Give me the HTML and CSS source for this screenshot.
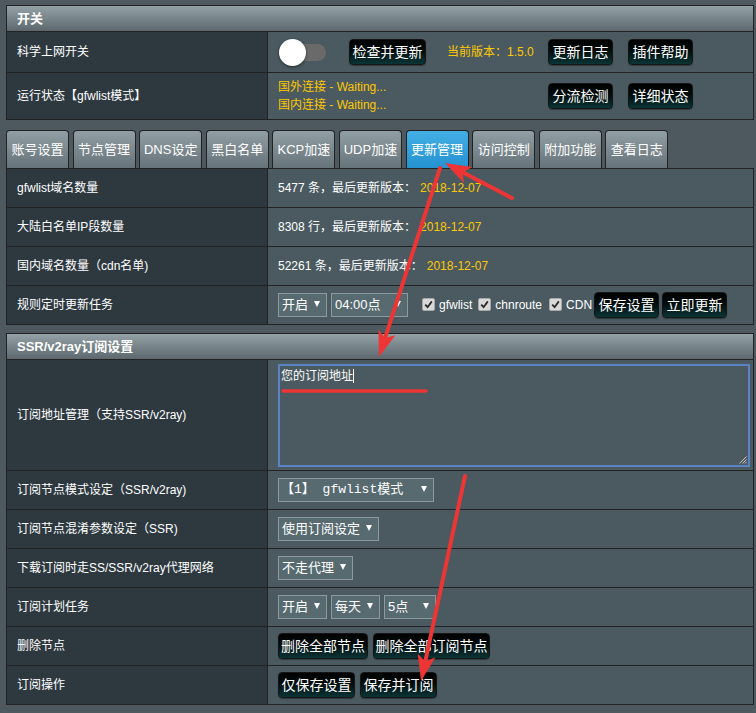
FILE: index.html
```html
<!DOCTYPE html>
<html lang="zh-CN">
<head>
<meta charset="utf-8">
<title>SS</title>
<link rel="stylesheet" href="styles.css">
</head>
<body>
<div class="page">
  <div class="tbl">
    <div class="thead">开关</div>
    <div class="row h40">
      <div class="lbl">科学上网开关</div>
      <div class="val">
        <span class="toggle"><span class="track"></span><span class="knob"></span></span>
        <button class="btn b5 ml23">检查并更新</button>
        <span class="version">当前版本：1.5.0</span>
        <button class="btn b4">更新日志</button>
        <button class="btn b4 ml15">插件帮助</button>
      </div>
    </div>
    <div class="row h46">
      <div class="lbl">运行状态【gfwlist模式】</div>
      <div class="val">
        <div class="status">
          <div>国外连接 - Waiting...</div>
          <div>国内连接 - Waiting...</div>
        </div>
        <button class="btn b4">分流检测</button>
        <button class="btn b4 ml15">详细状态</button>
      </div>
    </div>
  </div>

  <div class="tabs">
    <div class="tab">账号设置</div>
    <div class="tab">节点管理</div>
    <div class="tab">DNS设定</div>
    <div class="tab">黑白名单</div>
    <div class="tab">KCP加速</div>
    <div class="tab">UDP加速</div>
    <div class="tab active">更新管理</div>
    <div class="tab">访问控制</div>
    <div class="tab">附加功能</div>
    <div class="tab">查看日志</div>
  </div>

  <div class="tbl">
    <div class="row h38">
      <div class="lbl">gfwlist域名数量</div>
      <div class="val">5477 条，最后更新版本：<span class="date">2018-12-07</span></div>
    </div>
    <div class="row h38">
      <div class="lbl">大陆白名单IP段数量</div>
      <div class="val">8308 行，最后更新版本：<span class="date">2018-12-07</span></div>
    </div>
    <div class="row h38">
      <div class="lbl">国内域名数量（cdn名单)</div>
      <div class="val">52261 条，最后更新版本：<span class="date">2018-12-07</span></div>
    </div>
    <div class="row h38">
      <div class="lbl">规则定时更新任务</div>
      <div class="val">
        <span class="sel w49"><span>开启</span><span class="tri"></span></span>
        <span class="sel w77 ml4"><span>04:00点</span><span class="tri"></span></span>
        <span class="cb ml14"><svg width="9" height="9" viewBox="0 0 9 9"><path d="M1.2 4.6 L3.6 7.2 L7.8 1.4" fill="none" stroke="#2a2a2a" stroke-width="1.8"/></svg></span><span class="cbl">gfwlist</span>
        <span class="cb ml6"><svg width="9" height="9" viewBox="0 0 9 9"><path d="M1.2 4.6 L3.6 7.2 L7.8 1.4" fill="none" stroke="#2a2a2a" stroke-width="1.8"/></svg></span><span class="cbl">chnroute</span>
        <span class="cb ml7"><svg width="9" height="9" viewBox="0 0 9 9"><path d="M1.2 4.6 L3.6 7.2 L7.8 1.4" fill="none" stroke="#2a2a2a" stroke-width="1.8"/></svg></span><span class="cbl">CDN</span>
        <button class="btn b4 ml2">保存设置</button>
        <button class="btn b4 ml3">立即更新</button>
      </div>
    </div>
  </div>

  <div class="tbl mt8">
    <div class="thead">SSR/v2ray订阅设置</div>
    <div class="row h110">
      <div class="lbl">订阅地址管理（支持SSR/v2ray)</div>
      <div class="val top">
        <div class="textarea">您的订阅地址<span class="caret"></span>
          <svg class="grip" width="8" height="8" viewBox="0 0 8 8"><path d="M7.5 0.5 L0.5 7.5 M7.5 3.5 L3.5 7.5 M7.5 6 L6 7.5" stroke="#c8c8c8" stroke-width="1"/></svg>
        </div>
      </div>
    </div>
    <div class="row h38">
      <div class="lbl">订阅节点模式设定（SSR/v2ray)</div>
      <div class="val"><span class="sel w156 mono"><span>【1】 gfwlist模式</span><span class="tri"></span></span></div>
    </div>
    <div class="row h38">
      <div class="lbl">订阅节点混淆参数设定（SSR)</div>
      <div class="val"><span class="sel w101"><span>使用订阅设定</span><span class="tri"></span></span></div>
    </div>
    <div class="row h38">
      <div class="lbl">下载订阅时走SS/SSR/v2ray代理网络</div>
      <div class="val"><span class="sel w75"><span>不走代理</span><span class="tri"></span></span></div>
    </div>
    <div class="row h38">
      <div class="lbl">订阅计划任务</div>
      <div class="val">
        <span class="sel w49"><span>开启</span><span class="tri"></span></span>
        <span class="sel w49 ml4"><span>每天</span><span class="tri"></span></span>
        <span class="sel w52 ml4"><span>5点</span><span class="tri"></span></span>
      </div>
    </div>
    <div class="row h38">
      <div class="lbl">删除节点</div>
      <div class="val">
        <button class="btn b6">删除全部节点</button>
        <button class="btn b8 ml5">删除全部订阅节点</button>
      </div>
    </div>
    <div class="row h38">
      <div class="lbl">订阅操作</div>
      <div class="val">
        <button class="btn b5">仅保存设置</button>
        <button class="btn b5 ml5">保存并订阅</button>
      </div>
    </div>
  </div>
</div>

<svg class="annot" width="756" height="713" viewBox="0 0 756 713">
  <defs>
    <marker id="ah" markerUnits="userSpaceOnUse" markerWidth="26" markerHeight="18" refX="11" refY="9" orient="auto" viewBox="0 0 26 18">
      <path d="M0,0 L26,9 L0,18 L6,9 Z" fill="#ee3535"/>
    </marker>
  </defs>
  <g stroke="#ee3535" stroke-width="4" stroke-linecap="round" fill="none">
    <path d="M512,198 L458.3,169.9" marker-end="url(#ah)"/>
    <path d="M440,168 L383.6,342.7" marker-end="url(#ah)"/>
    <path d="M465,476 L424.2,666.3" marker-end="url(#ah)"/>
    <path d="M283,391 L426,391" stroke-width="3.5"/>
  </g>
</svg>
</body>
</html>
```

FILE: styles.css
```css
html, body {
  margin: 0;
  padding: 0;
}

body {
  width: 756px;
  height: 713px;
  overflow: hidden;
  background: #4d595e;
  color: #fff;
  font-family: "Liberation Sans", "Noto Sans CJK SC", sans-serif;
  font-size: 12px;
  line-height: 16px;
}

.page {
  padding: 5px 0 0 6px;
}

.tbl {
  width: 748px;
  box-sizing: border-box;
  border: 1px solid #222;
}

.mt8 {
  margin-top: 8px;
}

.thead {
  height: 25px;
  display: flex;
  align-items: center;
  padding-left: 10px;
  font-size: 13px;
  font-weight: bold;
  background: linear-gradient(#94a1a6, #5c686d);
}

.row {
  display: grid;
  grid-template-columns: 261px 1fr;
  border-top: 1px solid #222;
}

.tbl > .row:first-child {
  border-top: none;
}

.h38 { height: 38px; }
.h40 { height: 40px; }
.h46 { height: 46px; }
.h110 { height: 110px; }

.lbl {
  box-sizing: border-box;
  background: #2e393f;
  border-right: 1px solid #222;
  display: flex;
  align-items: center;
  padding-left: 10px;
  white-space: nowrap;
}

.val {
  background: #4a5a60;
  display: flex;
  align-items: center;
  padding-left: 10px;
  white-space: nowrap;
}

.val.top {
  align-items: flex-start;
  padding-top: 4px;
}

.date {
  color: #ffc800;
  margin-left: 4px;
}

/* toggle switch */
.toggle {
  position: relative;
  width: 47px;
  height: 27px;
  margin-left: 1px;
  flex: none;
}

.track {
  position: absolute;
  left: 0;
  top: 5px;
  width: 47px;
  height: 17px;
  border-radius: 9px;
  background: #6a6a6a;
}

.knob {
  position: absolute;
  left: 0;
  top: 0;
  width: 27px;
  height: 27px;
  border-radius: 50%;
  background: #fff;
  box-shadow: 0 1px 3px rgba(0, 0, 0, 0.55);
}

.version {
  width: 101px;
  margin-left: 21px;
  color: #ffc800;
}

.status {
  width: 270px;
  color: #ffc800;
  line-height: 18px;
}

/* buttons */
.btn {
  height: 26px;
  box-sizing: border-box;
  border: 1px solid #151515;
  border-radius: 4px;
  background: linear-gradient(#000 0%, #020d0d 45%, #0b3536 100%);
  color: #fff;
  font-family: "Liberation Sans", "Noto Sans CJK SC", sans-serif;
  font-size: 14px;
  line-height: 24px;
  padding: 0;
  text-align: center;
  flex: none;
  box-shadow: 0 1px 1px rgba(0, 0, 0, 0.35);
}

.b4 { width: 65px; }
.b5 { width: 77px; }
.b6 { width: 90px; }
.b8 { width: 117px; }

.ml2 { margin-left: 2px; }
.ml3 { margin-left: 3px; }
.ml4 { margin-left: 4px; }
.ml5 { margin-left: 5px; }
.ml6 { margin-left: 6px; }
.ml7 { margin-left: 7px; }
.ml14 { margin-left: 14px; }
.ml15 { margin-left: 15px; }
.ml23 { margin-left: 23px; }

/* selects */
.sel {
  display: inline-flex;
  align-items: center;
  justify-content: space-between;
  box-sizing: border-box;
  height: 24px;
  border: 1px solid #8d999d;
  background: #566a70;
  padding: 0 6px 0 3px;
  font-size: 13px;
  flex: none;
}

.sel.mono {
  font-family: "Liberation Mono", "Noto Sans CJK SC", monospace;
  padding-left: 2px;
}

.tri {
  width: 0;
  height: 0;
  border-left: 3px solid transparent;
  border-right: 3px solid transparent;
  border-top: 6px solid #fff;
  margin-top: -3px;
}

.w49 { width: 49px; }
.w52 { width: 52px; }
.w75 { width: 75px; }
.w77 { width: 77px; }
.w101 { width: 101px; }
.w156 { width: 156px; }

/* checkboxes */
.cb {
  display: inline-flex;
  align-items: center;
  justify-content: center;
  box-sizing: border-box;
  width: 13px;
  height: 13px;
  background: #d9d9d9;
  border: 1px solid #a9a9a9;
  border-radius: 2px;
  margin-top: -1px;
  flex: none;
}

.cbl {
  margin-left: 4px;
}

/* tabs */
.tabs {
  display: flex;
  gap: 3.6px;
  margin-top: 10px;
  height: 38px;
}

.tab {
  width: 63px;
  box-sizing: border-box;
  border: 1px solid #222;
  border-bottom: none;
  border-radius: 4px 4px 0 0;
  background: linear-gradient(#919ea3, #66737a);
  display: flex;
  align-items: center;
  justify-content: center;
  font-size: 13px;
  white-space: nowrap;
}

.tab.active {
  background: linear-gradient(#43afe4, #2592d2);
}

/* textarea */
.textarea {
  position: relative;
  width: 472px;
  height: 103px;
  box-sizing: border-box;
  border: 2px solid #5b82c3;
  background: #4a5a60;
  padding: 2px 1px;
  font-size: 12px;
}

.caret {
  display: inline-block;
  width: 1px;
  height: 14px;
  background: #fff;
  vertical-align: -3px;
}

.grip {
  position: absolute;
  right: 1px;
  bottom: 1px;
}

.annot {
  position: absolute;
  left: 0;
  top: 0;
  pointer-events: none;
}
```
